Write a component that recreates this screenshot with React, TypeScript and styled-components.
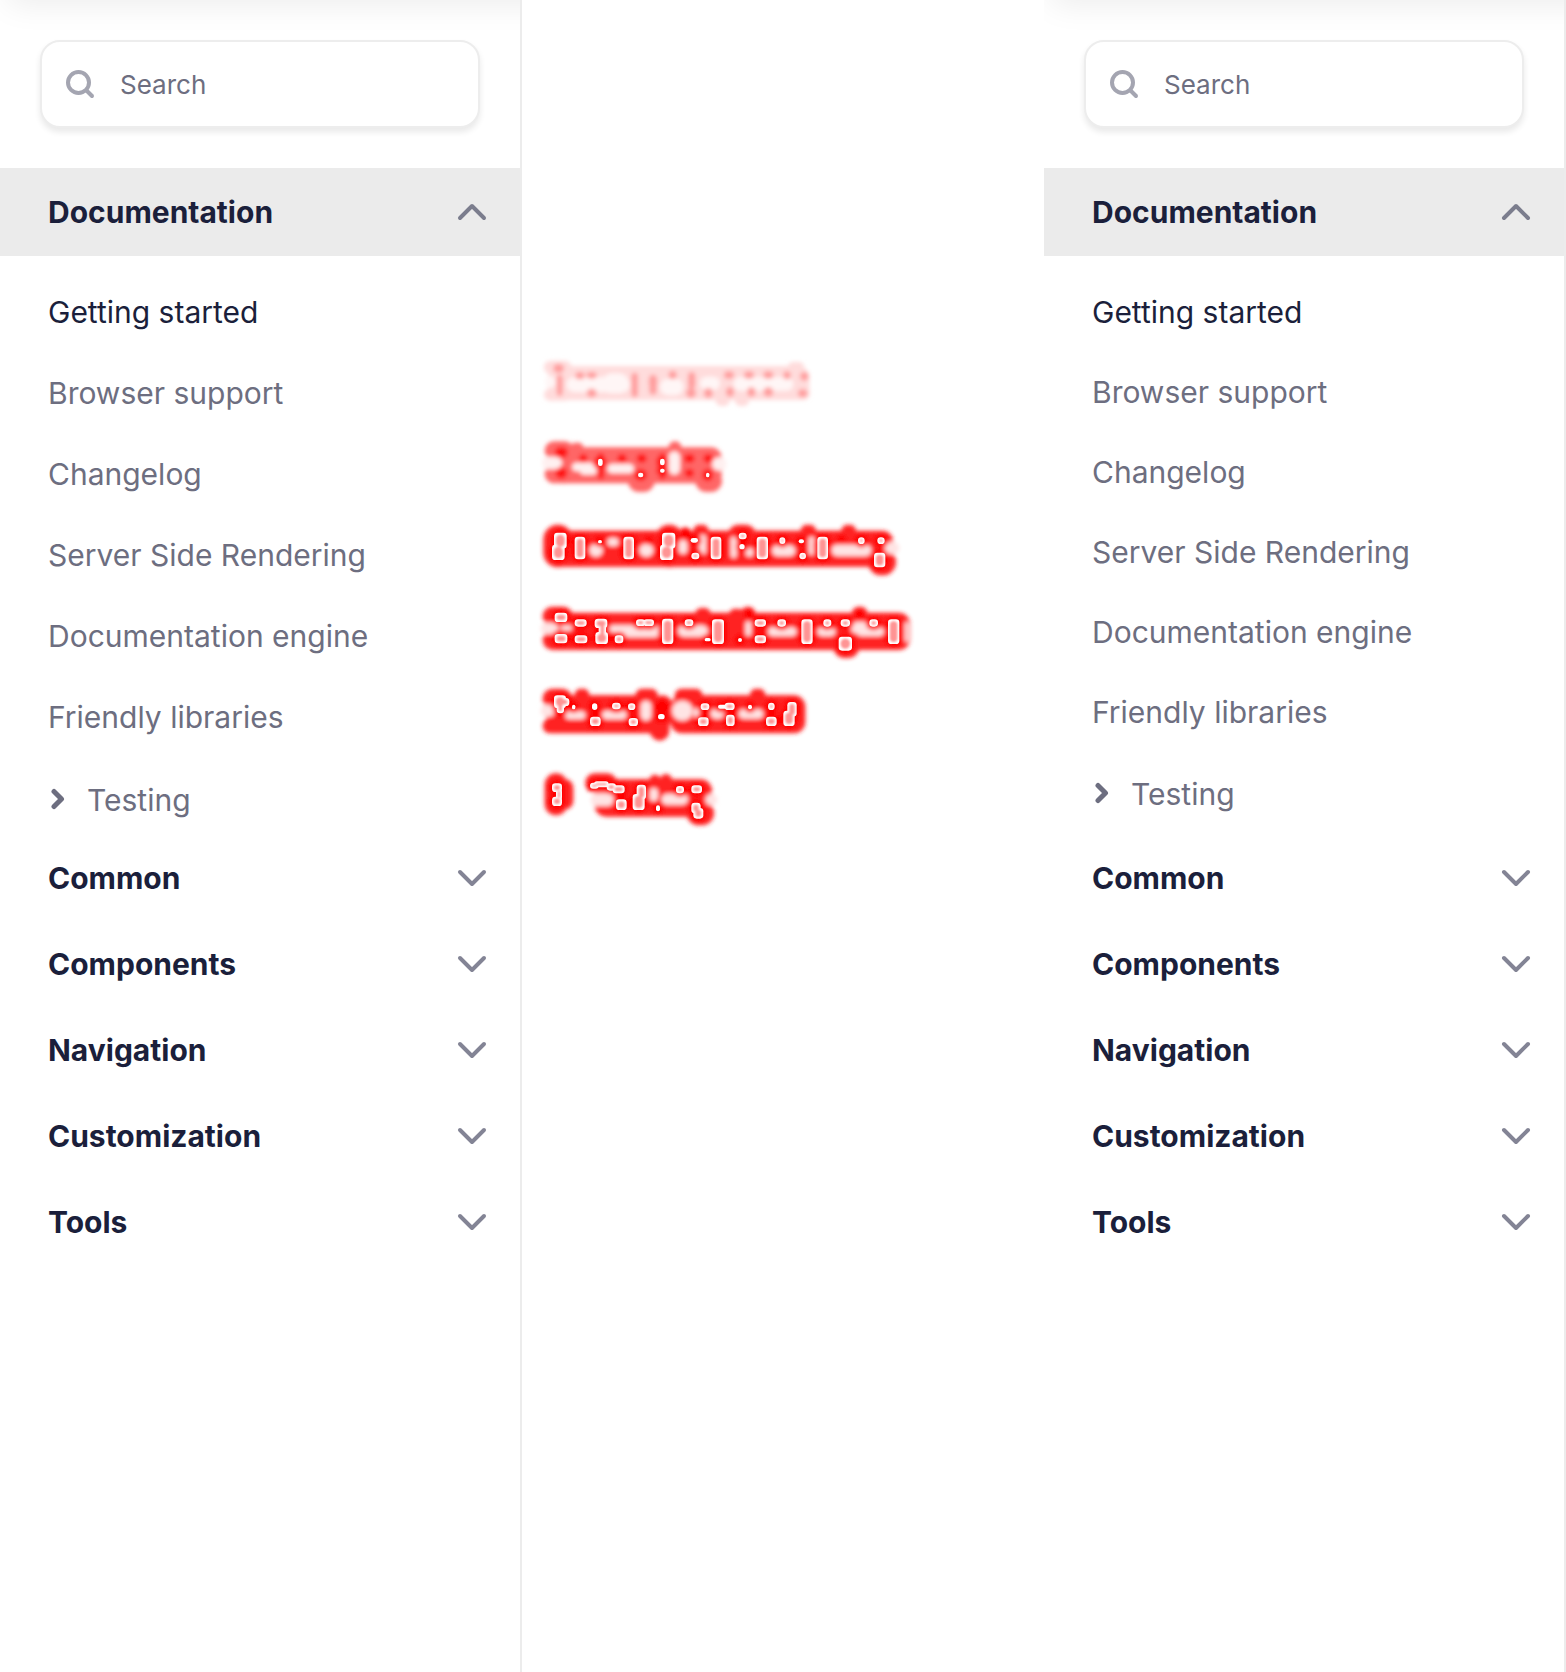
import React, { useId } from 'react';
import styled, { createGlobalStyle } from 'styled-components';

const ink = '#1b1f3b';
const muted = '#6d6e80';

const GlobalStyle = createGlobalStyle`
  *, *::before, *::after { box-sizing: border-box; }
  body { margin: 0; background: #fff; color: ${ink}; font-family: Inter, Roboto, sans-serif; }
`;

const Board = styled.main`
  display: grid;
  grid-template-columns: repeat(3, minmax(0, 1fr));
  min-height: 100vh;
`;

const Panel = styled.aside`
  position: relative;
  overflow: hidden;
  background: #fff;
  border-right: 2px solid #ececec;
  &::before {
    content: '';
    position: absolute;
    top: -40px;
    left: 8px;
    right: -60px;
    height: 40px;
    box-shadow: 0 4px 32px rgba(0, 0, 0, 0.08);
    pointer-events: none;
  }
`;

const SearchBox = styled.label`
  display: flex;
  align-items: center;
  gap: 22px;
  height: 88px;
  margin: 40px;
  padding: 0 24px;
  background: #fff;
  border: 2px solid #ededed;
  border-radius: 20px;
  box-shadow: 0 4px 6px rgba(0, 0, 0, 0.09);
  svg { flex: none; }
`;

const SearchInput = styled.input`
  flex: 1;
  min-width: 0;
  padding: 2px 0 0;
  border: 0;
  outline: 0;
  background: transparent;
  color: ${ink};
  font: 400 26px/32px Inter, Roboto, sans-serif;
  &::placeholder { color: ${muted}; opacity: 1; }
`;

const SectionButton = styled.button<{ $open?: boolean }>`
  display: flex;
  align-items: center;
  justify-content: space-between;
  width: 100%;
  height: ${(p) => (p.$open ? 88 : 86)}px;
  padding: 0 32px 0 48px;
  border: 0;
  background: ${(p) => (p.$open ? '#ebebeb' : 'transparent')};
  color: ${ink};
  font: 700 30px/40px Inter, Roboto, sans-serif;
  text-align: left;
  cursor: pointer;
`;

const PageList = styled.ul<{ $gap: number }>`
  display: flex;
  flex-direction: column;
  gap: ${(p) => p.$gap}px;
  height: 579px;
  margin: 0;
  padding: 16px 48px 0;
  list-style: none;
`;

const PageLink = styled.a<{ $current?: boolean }>`
  display: flex;
  align-items: center;
  height: 80px;
  color: ${(p) => (p.$current ? ink : muted)};
  font-size: 30px;
  line-height: 40px;
  text-decoration: none;
  white-space: nowrap;
`;

const GroupButton = styled.button`
  display: flex;
  align-items: center;
  gap: 19px;
  height: 83px;
  padding: 0;
  border: 0;
  background: transparent;
  color: ${muted};
  font: 400 30px/40px Inter, Roboto, sans-serif;
  cursor: pointer;
`;

const DiffPanel = styled.section`
  padding-top: 340px;
  background: #fff;
  svg { display: block; }
`;

const SearchIcon = () => (
  <svg width="32" height="32" viewBox="0 0 32 32" fill="none" stroke="#a4a5b1" strokeWidth="4" strokeLinecap="round" aria-hidden="true">
    <circle cx="12.5" cy="14.5" r="10.5" />
    <path d="M20.5 22.5 26 28" />
  </svg>
);

const Chevron = ({ up }: { up?: boolean }) => (
  <svg width="32" height="32" viewBox="0 0 32 32" fill="none" stroke={up ? '#7b7d8d' : '#838495'} strokeWidth="4" strokeLinecap="round" strokeLinejoin="round" aria-hidden="true">
    <path d={up ? 'M4 22 16 10 28 22' : 'M4 10 16 22 28 10'} />
  </svg>
);

const SmallChevron = () => (
  <svg width="20" height="24" viewBox="0 0 20 24" fill="none" stroke={muted} strokeWidth="5" strokeLinecap="round" strokeLinejoin="round" aria-hidden="true">
    <path d="M6 3.5 13.5 11 6 18.5" />
  </svg>
);

const pages = ['Getting started', 'Browser support', 'Changelog', 'Server Side Rendering', 'Documentation engine', 'Friendly libraries'];
const sections = ['Common', 'Components', 'Navigation', 'Customization', 'Tools'];

function Sidebar({ gap }: { gap: number }) {
  const id = useId();
  return (
    <Panel>
      <SearchBox htmlFor={id}>
        <SearchIcon />
        <SearchInput id={id} type="text" placeholder="Search" aria-label="Search" />
      </SearchBox>
      <nav>
        <SectionButton $open aria-expanded="true">Documentation<Chevron up /></SectionButton>
        <PageList $gap={gap}>
          {pages.map((page, i) => (
            <li key={page}><PageLink href="#" $current={i === 0}>{page}</PageLink></li>
          ))}
          <li><GroupButton aria-expanded="false"><SmallChevron />Testing</GroupButton></li>
        </PageList>
        {sections.map((name) => (
          <SectionButton key={name} aria-expanded="false">{name}<Chevron /></SectionButton>
        ))}
      </nav>
    </Panel>
  );
}

// Heat marks of the difference map; every box is [x, y, width, height].
type Box = [number, number, number, number];
interface Heat {
  halo: string;
  light: string;
  spot: string;
  bands: Box[];
  tops: Box[];
  lights: Box[];
  spots: Box[];
  cores: Box[];
}

const strong = { halo: '#ff2424', light: '#ffe4e4', spot: '#ff0505' };

const heat: Heat[] = [
  {
    halo: '#ffdcdc', light: '#fff6f6', spot: '#ff9f9f',
    bands: [[84, 78, 784, 102]],
    tops: [[72, 62, 82, 40], [72, 146, 82, 36], [804, 66, 48, 30], [586, 160, 44, 38], [644, 160, 44, 38], [820, 140, 50, 40]],
    lights: [[140, 112, 190, 44], [246, 100, 80, 60], [420, 116, 70, 50], [540, 110, 60, 40], [640, 112, 180, 40], [76, 108, 30, 36]],
    spots: [[100, 72, 32, 26], [110, 104, 18, 64], [166, 96, 28, 22], [200, 96, 30, 20], [200, 146, 30, 26], [334, 98, 20, 74], [388, 104, 22, 60], [386, 110, 26, 30], [446, 92, 24, 26], [504, 96, 22, 50], [498, 144, 30, 30], [552, 144, 26, 30], [612, 94, 30, 22], [672, 94, 30, 22], [730, 94, 30, 22], [618, 142, 24, 28], [682, 142, 24, 28], [730, 142, 30, 28], [790, 94, 22, 24], [840, 96, 26, 26], [834, 148, 28, 24]],
    cores: [],
  },
  {
    halo: '#ff6666', light: '#fff0f0', spot: '#ff1212',
    bands: [[94, 322, 512, 108]],
    tops: [[74, 304, 88, 56], [74, 374, 88, 56], [152, 308, 38, 30], [446, 304, 38, 36], [324, 390, 80, 66], [526, 390, 80, 66]],
    lights: [[66, 350, 60, 38], [156, 368, 66, 26], [180, 380, 50, 24], [262, 372, 80, 28], [446, 334, 34, 70], [576, 352, 44, 40]],
    spots: [[104, 320, 40, 34], [106, 382, 36, 34], [178, 342, 24, 26], [234, 340, 18, 78], [292, 342, 28, 26], [350, 342, 30, 26], [418, 340, 18, 78], [492, 342, 32, 26], [550, 342, 30, 26], [494, 386, 28, 26], [346, 388, 32, 32], [548, 386, 30, 38]],
    cores: [[236, 358, 10, 18], [422, 358, 10, 16], [422, 388, 10, 8], [356, 400, 12, 10], [560, 400, 6, 10]],
  },
  {
    ...strong,
    bands: [[80, 572, 1040, 108]],
    tops: [[70, 554, 88, 128], [406, 554, 84, 128], [624, 554, 84, 62], [1044, 626, 84, 80], [520, 554, 46, 36], [842, 554, 46, 36], [964, 554, 44, 36]],
    lights: [[208, 612, 40, 38], [262, 594, 34, 24], [358, 612, 42, 38], [476, 600, 26, 42], [538, 584, 20, 60], [632, 590, 18, 64], [676, 624, 26, 26], [756, 616, 70, 32], [866, 590, 18, 56], [934, 614, 120, 34], [1094, 606, 44, 36]],
    spots: [[222, 588, 34, 30], [374, 588, 26, 26], [480, 562, 32, 34], [950, 584, 30, 26]],
    cores: [[104, 580, 34, 44], [98, 616, 34, 42], [166, 592, 28, 64], [236, 602, 8, 6], [312, 592, 28, 64], [428, 580, 36, 44], [422, 616, 36, 42], [514, 596, 18, 10], [516, 640, 20, 16], [574, 592, 28, 64], [658, 580, 20, 16], [660, 614, 12, 12], [712, 592, 30, 64], [780, 594, 14, 16], [838, 600, 12, 8], [840, 640, 16, 16], [894, 592, 28, 64], [1016, 594, 16, 16], [1074, 594, 18, 16], [1064, 640, 30, 40]],
  },
  {
    ...strong,
    bands: [[82, 818, 1088, 112]],
    tops: [[68, 800, 90, 58], [68, 870, 90, 60], [526, 804, 46, 34], [628, 806, 44, 34], [662, 800, 44, 42], [940, 886, 78, 68], [996, 800, 46, 40]],
    lights: [[62, 848, 54, 34], [122, 856, 34, 16], [268, 856, 150, 20], [300, 868, 116, 24], [474, 856, 90, 34], [676, 844, 18, 44], [744, 862, 86, 26], [892, 862, 54, 26], [992, 846, 60, 34], [1010, 862, 82, 26], [1154, 846, 12, 60]],
    spots: [[672, 806, 30, 30], [1004, 808, 30, 30]],
    cores: [[106, 820, 34, 24], [106, 884, 34, 24], [166, 840, 32, 18], [166, 888, 34, 20], [226, 838, 34, 24], [238, 850, 18, 40], [228, 878, 34, 32], [286, 888, 22, 20], [350, 840, 24, 16], [372, 840, 28, 16], [428, 838, 30, 72], [496, 840, 22, 16], [556, 896, 14, 6], [578, 840, 32, 70], [656, 896, 8, 8], [706, 840, 30, 18], [706, 888, 30, 20], [774, 840, 22, 18], [846, 840, 30, 70], [912, 840, 20, 18], [964, 840, 24, 18], [1050, 840, 22, 18], [1106, 840, 30, 70], [958, 892, 36, 38]],
  },
  {
    ...strong,
    bands: [[78, 1066, 352, 114], [452, 1066, 404, 114]],
    tops: [[68, 1046, 88, 60], [68, 1136, 64, 44], [164, 1046, 44, 36], [346, 1046, 68, 42], [390, 1130, 58, 72], [464, 1046, 84, 42], [690, 1046, 46, 36], [400, 1066, 56, 96]],
    lights: [[62, 1094, 44, 36], [136, 1114, 60, 24], [246, 1112, 74, 26], [362, 1082, 32, 60], [456, 1082, 62, 60], [520, 1104, 18, 30], [572, 1106, 40, 30], [656, 1108, 74, 28]],
    spots: [[404, 1078, 44, 44]],
    cores: [[104, 1068, 32, 34], [122, 1076, 24, 20], [112, 1090, 18, 28], [158, 1096, 6, 10], [218, 1092, 12, 16], [212, 1132, 28, 24], [278, 1090, 22, 16], [326, 1092, 18, 16], [328, 1136, 24, 20], [416, 1124, 16, 12], [544, 1092, 22, 16], [536, 1134, 28, 22], [596, 1096, 24, 8], [616, 1090, 26, 18], [620, 1126, 22, 30], [686, 1096, 8, 10], [746, 1090, 16, 18], [740, 1132, 28, 24], [804, 1088, 24, 40], [792, 1114, 30, 42]],
  },
  {
    ...strong,
    bands: [[224, 1318, 352, 112]],
    tops: [[74, 1300, 68, 126], [110, 1318, 50, 90], [196, 1300, 94, 56], [388, 1304, 34, 34], [420, 1302, 36, 38], [500, 1384, 82, 72]],
    lights: [[212, 1360, 70, 38], [424, 1362, 80, 32], [388, 1344, 26, 40], [556, 1362, 36, 34]],
    spots: [],
    cores: [[98, 1332, 26, 22], [110, 1348, 14, 30], [98, 1372, 26, 24], [212, 1330, 22, 14], [224, 1326, 40, 14], [262, 1332, 24, 18], [280, 1338, 32, 20], [290, 1380, 28, 28], [352, 1336, 24, 40], [340, 1364, 32, 44], [410, 1398, 8, 14], [470, 1340, 20, 18], [516, 1338, 28, 20], [516, 1390, 24, 28], [522, 1406, 26, 28]],
  },
];

const grow = (boxes: Box[], by: number) =>
  boxes.map(([x, y, w, h]): Box => [x - by, y - by, w + 2 * by, h + 2 * by]);

const Marks = ({ boxes, fill, round = 100 }: { boxes: Box[]; fill: string; round?: number }) => (
  <>
    {boxes.map(([x, y, w, h]) => (
      <rect key={`${x}-${y}`} x={x} y={y} width={w} height={h} rx={Math.min(round, w / 2, h / 2)} fill={fill} />
    ))}
  </>
);

const HeatMap = () => (
  <svg width="418" height="500" viewBox="6 0 1254 1500" role="img" aria-label="Difference between the two menus">
    <defs>
      <filter id="soft" x="-10%" y="-30%" width="120%" height="160%"><feGaussianBlur stdDeviation="6" /></filter>
      <filter id="faint" x="-10%" y="-30%" width="120%" height="160%"><feGaussianBlur stdDeviation="3" /></filter>
    </defs>
    {heat.map((row, i) => (
      <g key={i}>
        <g filter="url(#soft)">
          <Marks boxes={row.bands} fill={row.halo} round={34} />
          <Marks boxes={row.tops} fill={row.halo} />
          <Marks boxes={row.lights} fill={row.light} />
          <Marks boxes={row.spots} fill={row.spot} />
          <Marks boxes={grow(row.cores, 13)} fill={row.spot} />
        </g>
        <Marks boxes={grow(row.cores, 2)} fill="#fff" round={10} />
        <g filter="url(#faint)">
          <Marks boxes={grow(row.cores.filter(([, , w, h]) => w > 12 && h > 12), -4)} fill="#ff9494" />
        </g>
      </g>
    ))}
  </svg>
);

export default function App() {
  return (
    <>
      <GlobalStyle />
      <Board>
        <Sidebar gap={1} />
        <DiffPanel><HeatMap /></DiffPanel>
        <Sidebar gap={0} />
      </Board>
    </>
  );
}
